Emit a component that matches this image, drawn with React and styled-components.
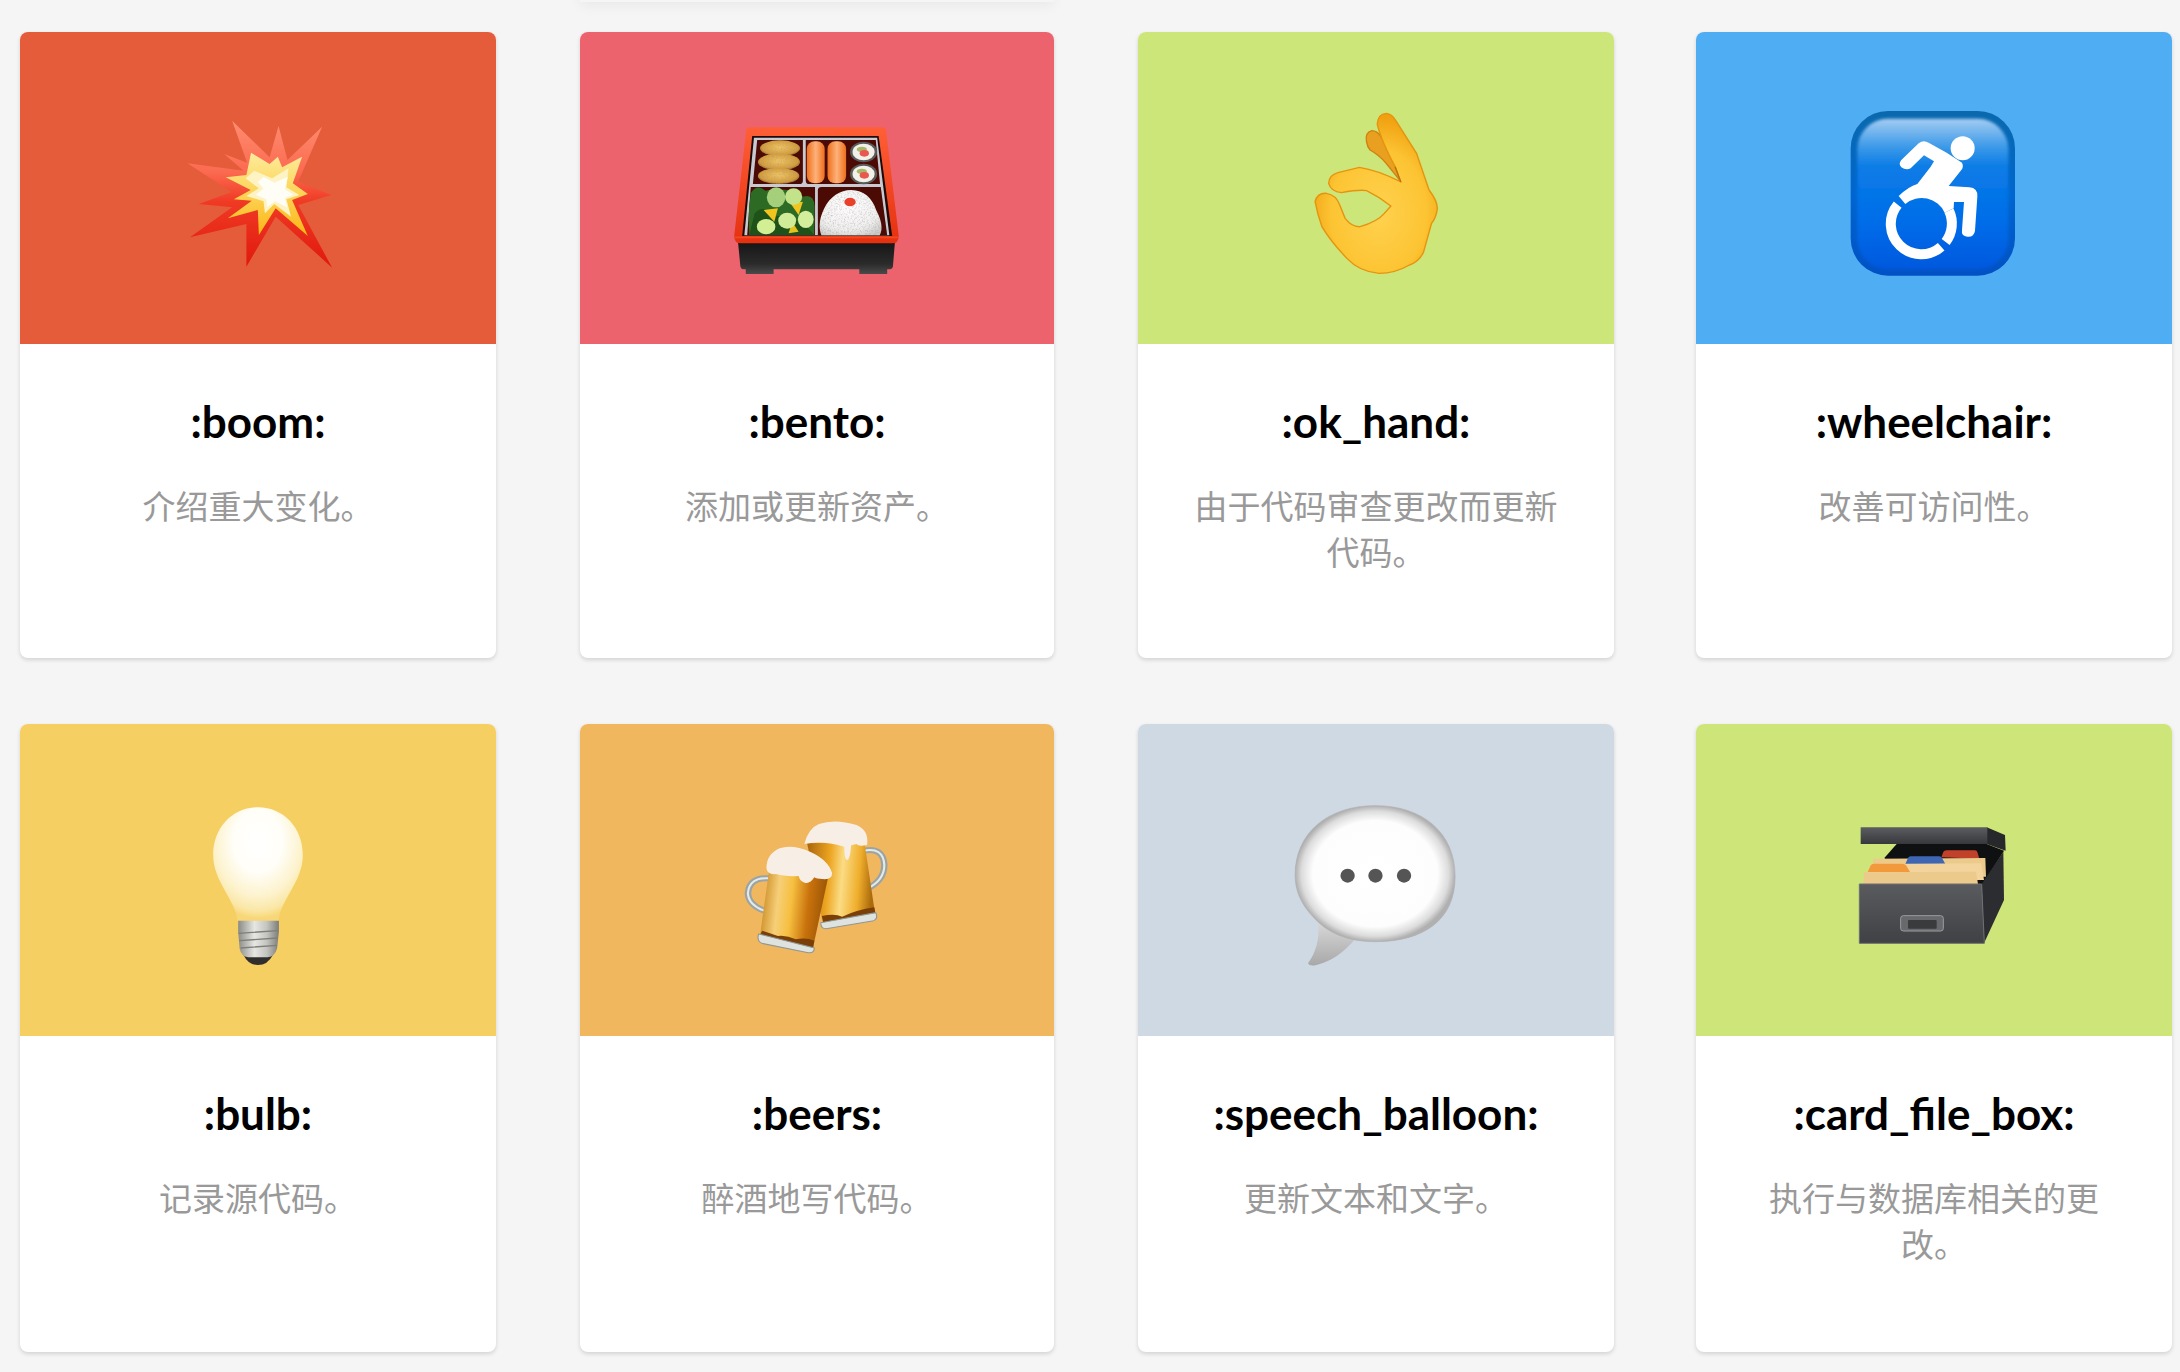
import React from "react";
import styled, { createGlobalStyle } from "styled-components";

const GlobalStyle = createGlobalStyle`
  html, body {
    margin: 0;
    padding: 0;
    background: #f5f5f5;
  }
`;

const BoomIcon = () => (
  <EmojiSvg viewBox="442.5 264 560 600" preserveAspectRatio="none">
    <defs>
      <linearGradient id="boomOuter" x1="0" y1="0" x2="0" y2="1">
        <stop offset="0" stopColor="#ff8d70" />
        <stop offset="0.35" stopColor="#fb6a50" />
        <stop offset="0.55" stopColor="#f03a24" />
        <stop offset="1" stopColor="#e0180e" />
      </linearGradient>
      <linearGradient id="boomMid" x1="0" y1="0" x2="0" y2="1">
        <stop offset="0" stopColor="#fdeb9c" />
        <stop offset="0.45" stopColor="#fcd65c" />
        <stop offset="1" stopColor="#fdb514" />
      </linearGradient>
    </defs>
    <path
      fill="url(#boomOuter)"
      d="M650 362 L755 472 L780 378 L805 480 L902 380 L835 545 L928 585 L835 615 L930 803 L772 650 L690 800 L690 672 L532 712 L650 622 L557 612 L648 576 L525 490 L682 512 L628 462 L692 488 Z"
    />
    <path
      fill="url(#boomMid)"
      d="M703 458 L755 492 L778 470 L790 502 L846 470 L820 550 L862 582 L818 600 L862 708 L772 625 L725 705 L722 630 L638 655 L705 602 L655 598 L702 570 L632 532 L690 525 Z"
    />
    <path
      fill="#fdf3c4"
      d="M712 512 L762 535 L808 505 L802 562 L838 585 L802 598 L815 650 L768 612 L742 640 L738 604 L690 588 L725 565 L688 535 Z"
    />
    <path
      fill="#fffef6"
      d="M738 530 L768 548 L806 530 L798 568 L822 584 L798 594 L804 622 L770 604 L748 622 L746 598 L716 584 L738 566 L722 546 Z"
    />
  </EmojiSvg>
);

const BentoIcon = () => (
  <EmojiSvg viewBox="439.5 264 560 600" preserveAspectRatio="none">
    <defs>
      <linearGradient id="bentoLid" x1="0" y1="0" x2="0" y2="1">
        <stop offset="0" stopColor="#ff5f36" />
        <stop offset="1" stopColor="#e5300f" />
      </linearGradient>
      <linearGradient id="bentoBase" x1="0" y1="0" x2="0" y2="1">
        <stop offset="0" stopColor="#141414" />
        <stop offset="0.7" stopColor="#2b2b2b" />
        <stop offset="1" stopColor="#4a4a4a" />
      </linearGradient>
      <linearGradient id="bentoSalmon" x1="0" y1="0" x2="1" y2="0">
        <stop offset="0" stopColor="#f0701c" />
        <stop offset="0.5" stopColor="#fdb27a" />
        <stop offset="1" stopColor="#ef6f1a" />
      </linearGradient>
      <radialGradient id="bentoFried" cx="0.5" cy="0.45" r="0.6">
        <stop offset="0" stopColor="#f0c662" />
        <stop offset="0.75" stopColor="#d39c36" />
        <stop offset="1" stopColor="#6e4412" />
      </radialGradient>
      <radialGradient id="bentoRice" cx="0.45" cy="0.35" r="0.75">
        <stop offset="0" stopColor="#ffffff" />
        <stop offset="0.7" stopColor="#f0f0f0" />
        <stop offset="1" stopColor="#cccccc" />
      </radialGradient>
      <filter id="bentoGrain" x="0" y="0" width="1" height="1">
        <feTurbulence type="fractalNoise" baseFrequency="0.22" numOctaves="2" seed="4" result="noise" />
        <feColorMatrix in="noise" type="matrix" values="0 0 0 0 0.35  0 0 0 0 0.3  0 0 0 0 0.25  0 0 0 -1.2 0.68" result="speck" />
        <feComposite in="speck" in2="SourceAlpha" operator="in" result="clipped" />
        <feMerge>
          <feMergeNode in="SourceGraphic" />
          <feMergeNode in="clipped" />
        </feMerge>
      </filter>
    </defs>
    <path fill="url(#bentoBase)" d="M498 722 L938 722 L932 800 Q930 808 920 808 L916 808 L916 822 L838 822 L838 808 L598 808 L598 822 L520 822 L520 808 L515 808 Q507 808 505 800 Z" />
    <path fill="url(#bentoLid)" d="M532 382 L902 382 Q912 382 913 392 L948 704 Q950 730 930 730 L506 730 Q486 730 488 704 L521 392 Q522 382 532 382 Z" />
    <path fill="#1d0a05" d="M538 408 L892 408 L930 708 L510 708 Z" />
    <path fill="#c9c9d2" d="M543 413 L888 413 L922 706 L516 706 Z" />
    <path fill="#4b0a03" d="M552 420 L680 420 L680 542 Q680 552 670 552 L540 552 Z" />
    <path fill="#4b0a03" d="M688 420 L884 420 L896 552 L698 552 Q688 552 688 542 Z" />
    <path fill="#4b0a03" d="M534 561 L714 561 L714 706 L524 706 Z" />
    <path fill="#4b0a03" d="M732 561 L898 561 L916 706 L722 706 L722 571 Q722 561 732 561 Z" />
    <g filter="url(#bentoGrain)">
      <ellipse cx="616" cy="445" rx="56" ry="24" fill="url(#bentoFried)" />
      <ellipse cx="613" cy="486" rx="59" ry="25" fill="url(#bentoFried)" />
      <ellipse cx="612" cy="528" rx="58" ry="24" fill="url(#bentoFried)" />
    </g>
    <rect x="691" y="424" width="50" height="126" rx="22" fill="url(#bentoSalmon)" />
    <rect x="749" y="424" width="52" height="126" rx="22" fill="url(#bentoSalmon)" />
    <ellipse cx="850" cy="456" rx="38" ry="31" fill="#5b5b5b" />
    <ellipse cx="850" cy="456" rx="31" ry="25" fill="#f1f1ea" />
    <ellipse cx="845" cy="448" rx="14" ry="8" fill="#a8b868" />
    <ellipse cx="852" cy="460" rx="13" ry="10" fill="#e8584e" />
    <ellipse cx="850" cy="522" rx="38" ry="31" fill="#5b5b5b" />
    <ellipse cx="850" cy="522" rx="31" ry="25" fill="#f1f1ea" />
    <ellipse cx="845" cy="514" rx="14" ry="8" fill="#a8b868" />
    <ellipse cx="852" cy="526" rx="13" ry="10" fill="#e8584e" />
    <path fill="#2d6a24" d="M534 580 Q550 550 575 572 Q640 558 680 590 Q712 580 713 620 L712 705 L530 705 Q525 640 534 580 Z" />
    <path fill="#1f5219" d="M545 640 Q570 610 600 650 Q640 640 700 690 L712 705 L530 705 Z" />
    <path fill="#f2c41e" d="M570 630 L610 625 L600 665 Z" />
    <path fill="#f2c41e" d="M645 610 L680 605 L668 645 Z" />
    <path fill="#e8c21c" d="M650 665 L668 695 L640 700 Z" />
    <ellipse cx="605" cy="592" rx="26" ry="30" fill="#a5cf7a" />
    <ellipse cx="654" cy="590" rx="24" ry="25" fill="#c3e38a" />
    <ellipse cx="577" cy="680" rx="26" ry="23" fill="#d3ef93" />
    <ellipse cx="636" cy="662" rx="25" ry="24" fill="#d0ec98" />
    <ellipse cx="688" cy="658" rx="22" ry="26" fill="#d3ef9c" />
    <path
      filter="url(#bentoGrain)"
      fill="url(#bentoRice)"
      d="M732 706 C722 680 728 650 740 625 C755 590 785 570 815 570 C850 570 875 595 885 630 C900 660 905 685 895 706 Z"
    />
    <ellipse cx="812" cy="606" rx="16" ry="13" fill="#e9402c" />
    <path stroke="#ef4a20" strokeWidth="5" fill="none" d="M490 712 L946 712" />
  </EmojiSvg>
);

const OkHandIcon = () => (
  <EmojiSvg viewBox="436.5 264 560 600" preserveAspectRatio="none">
    <defs>
      <radialGradient id="okSkin" cx="0.52" cy="0.62" r="0.6">
        <stop offset="0" stopColor="#ffd24f" />
        <stop offset="0.65" stopColor="#fcc433" />
        <stop offset="1" stopColor="#f0a010" />
      </radialGradient>
    </defs>
    <path
      fill="#e9a021"
      stroke="#d08210"
      strokeWidth="4"
      d="M690 425 Q685 398 705 392 Q720 392 730 410 L795 510 L790 550 L745 490 Q725 465 700 450 Q692 440 690 425 Z"
    />
    <path
      fill="url(#okSkin)"
      stroke="#e6940e"
      strokeWidth="4"
      d="M720 372 Q722 342 745 340 Q762 342 772 362 L830 460 L865 570 Q890 605 888 628 Q884 655 872 670 L850 755 Q838 785 810 795 Q770 820 725 820 Q670 815 635 775 Q590 725 565 680 Q552 640 546 605 Q552 578 578 580 Q605 585 615 615 L630 655 Q650 682 672 680 Q720 665 740 640 L758 618 Q725 590 690 572 Q670 568 620 578 Q590 575 584 550 Q585 525 610 518 L670 502 Q720 510 785 545 L770 500 Q730 420 720 372 Z"
    />
    <path fill="none" stroke="#b9720c" strokeWidth="4" d="M770 500 L786 546" />
  </EmojiSvg>
);

const WheelchairIcon = () => (
  <EmojiSvg viewBox="462 264 600 600" preserveAspectRatio="none">
    <defs>
      <linearGradient id="wheelRim" x1="0" y1="0" x2="0" y2="1">
        <stop offset="0" stopColor="#0a69ac" />
        <stop offset="0.5" stopColor="#0066cf" />
        <stop offset="1" stopColor="#0151c4" />
      </linearGradient>
      <linearGradient id="wheelFace" x1="0" y1="0" x2="0" y2="1">
        <stop offset="0" stopColor="#a4cdf3" />
        <stop offset="0.18" stopColor="#3f9be8" />
        <stop offset="0.32" stopColor="#0a7ce6" />
        <stop offset="0.7" stopColor="#006ce8" />
        <stop offset="1" stopColor="#0058de" />
      </linearGradient>
      <filter id="wheelSoft">
        <feGaussianBlur stdDeviation="4" />
      </filter>
    </defs>
    <rect x="512" y="333" width="493" height="494" rx="112" fill="url(#wheelRim)" />
    <rect x="532" y="356" width="453" height="452" rx="92" fill="url(#wheelFace)" filter="url(#wheelSoft)" />
    <circle cx="848" cy="445" r="36" fill="#fff" />
    <path
      fill="#fff"
      d="M664 480 L716 430 Q730 418 746 428 L800 458 L846 488 Q852 500 844 510 L806 558 L868 562 Q894 564 892 590 L885 692 Q882 712 862 710 Q843 708 846 690 L852 606 L822 606 L821 625 L794 638 A 76 76 0 0 0 676 612 L656 588 Q685 560 712 552 L752 500 L762 484 L732 466 L692 505 Q678 512 664 502 Q654 492 664 480 Z"
    />
    <path fill="none" stroke="#fff" strokeWidth="30" d="M653 614 A 91 91 0 0 0 783.5 740" />
    <path fill="none" stroke="#fff" strokeWidth="30" d="M797 726 A 91 91 0 0 0 807 632" />
  </EmojiSvg>
);

const BulbIcon = () => (
  <EmojiSvg viewBox="442.5 240 560 600" preserveAspectRatio="none">
    <defs>
      <radialGradient id="bulbGlass" cx="0.5" cy="0.3" r="0.68">
        <stop offset="0" stopColor="#ffffff" />
        <stop offset="0.4" stopColor="#fffef8" />
        <stop offset="0.7" stopColor="#fdf3cf" />
        <stop offset="0.9" stopColor="#fae7a6" />
        <stop offset="1" stopColor="#f8d778" />
      </radialGradient>
      <linearGradient id="bulbMetal" x1="0" y1="0" x2="1" y2="0">
        <stop offset="0" stopColor="#8a8a86" />
        <stop offset="0.4" stopColor="#e6e6e2" />
        <stop offset="0.7" stopColor="#c4c4c0" />
        <stop offset="1" stopColor="#7c7c78" />
      </linearGradient>
    </defs>
    <path
      fill="url(#bulbGlass)"
      d="M665 662 C660 600 597 545 597 465 C597 385 650 322 722 322 C795 322 848 385 848 465 C848 545 785 600 780 662 Z"
    />
    <path fill="#302f2d" d="M682 765 L764 765 Q750 795 722 795 Q695 795 682 765 Z" />
    <path fill="url(#bulbMetal)" d="M667 662 L781 662 L781 695 L776 745 Q770 770 750 772 L695 772 Q675 770 671 745 L667 695 Z" />
    <path fill="none" stroke="#7e7e7a" strokeWidth="4" d="M668 700 L778 692 M670 722 L778 714 M674 744 L776 736" />
  </EmojiSvg>
);

const BeersIcon = () => (
  <EmojiSvg viewBox="439.5 240 560 600" preserveAspectRatio="none">
    <defs>
      <linearGradient id="beerBack" x1="0" y1="0" x2="1" y2="0.1">
        <stop offset="0" stopColor="#a8640a" />
        <stop offset="0.35" stopColor="#eda522" />
        <stop offset="0.55" stopColor="#fbdc84" />
        <stop offset="0.8" stopColor="#efae2c" />
        <stop offset="1" stopColor="#ad6c0c" />
      </linearGradient>
      <linearGradient id="beerFront" x1="0" y1="0" x2="1" y2="0.12">
        <stop offset="0" stopColor="#c27c10" />
        <stop offset="0.3" stopColor="#f6cf78" />
        <stop offset="0.5" stopColor="#f6bf40" />
        <stop offset="0.75" stopColor="#c9720c" />
        <stop offset="1" stopColor="#9c5606" />
      </linearGradient>
    </defs>
    <path fill="none" stroke="#9aa4a4" strokeWidth="18" d="M850 452 Q905 440 908 495 Q908 540 862 565" />
    <path fill="none" stroke="#e4e9e9" strokeWidth="6" d="M850 452 Q905 440 908 495 Q908 540 862 565" />
    <path fill="url(#beerBack)" d="M692 430 L852 425 L882 640 L736 672 Z" />
    <path fill="#7a3f06" d="M733 648 Q770 640 790 650 Q830 630 880 622 L884 645 L738 672 Z" />
    <path fill="#dfe3e0" stroke="#8f9796" strokeWidth="3" d="M730 668 L884 638 Q892 655 878 662 L745 686 Q730 686 730 668 Z" />
    <path fill="#f7efe6" d="M684 432 Q695 385 725 372 Q770 355 830 375 Q865 390 860 435 Q835 440 830 432 L815 436 Q812 480 804 480 Q796 480 796 440 Q730 420 684 432 Z" />
    <path fill="none" stroke="#9aa4a4" strokeWidth="18" d="M586 535 Q530 530 526 580 Q528 615 572 632" />
    <path fill="none" stroke="#e4e9e9" strokeWidth="6" d="M586 535 Q530 530 526 580 Q528 615 572 632" />
    <path fill="url(#beerFront)" d="M585 515 L750 535 L708 745 L560 705 Z" />
    <path fill="#7a3f06" d="M566 692 Q590 700 610 708 Q635 705 660 718 Q690 712 712 722 L708 745 L560 705 Z" />
    <path fill="#dfe3e0" stroke="#8f9796" strokeWidth="3" d="M556 702 L712 744 Q712 760 695 758 L565 730 Q550 722 556 702 Z" />
    <path fill="#f7efe6" d="M578 505 Q578 462 615 445 Q650 432 700 455 Q752 480 762 520 Q762 540 735 537 Q718 537 712 532 Q700 552 685 548 Q672 545 668 528 Q630 530 605 522 Q580 525 578 505 Z" />
  </EmojiSvg>
);

const SpeechIcon = () => (
  <EmojiSvg viewBox="436.5 240 560 600" preserveAspectRatio="none">
    <defs>
      <radialGradient id="speechFill" cx="0.5" cy="0.5" r="0.5">
        <stop offset="0" stopColor="#ffffff" />
        <stop offset="0.78" stopColor="#fdfdfd" />
        <stop offset="0.92" stopColor="#dcdcdc" />
        <stop offset="1" stopColor="#b0b0b0" />
      </radialGradient>
      <linearGradient id="speechTail" x1="0" y1="0" x2="0" y2="1">
        <stop offset="0" stopColor="#d6d6d6" />
        <stop offset="1" stopColor="#a8a8a8" />
      </linearGradient>
    </defs>
    <path fill="url(#speechTail)" d="M555 672 Q560 740 526 790 Q530 800 550 795 Q610 780 660 715 Z" />
    <path
      fill="url(#speechFill)"
      stroke="#b0b0b0"
      strokeWidth="2"
      d="M714 317 C850 317 938 400 938 530 C938 660 850 725 714 725 C640 725 580 700 540 650 C505 610 490 570 490 525 C490 400 580 317 714 317 Z"
    />
    <ellipse cx="637" cy="527" rx="20" ry="21" fill="#555" />
    <ellipse cx="715" cy="527" rx="20" ry="21" fill="#555" />
    <ellipse cx="795" cy="527" rx="20" ry="21" fill="#555" />
  </EmojiSvg>
);

const CardFileBoxIcon = () => (
  <EmojiSvg viewBox="462 240 600 600" preserveAspectRatio="none">
    <defs>
      <linearGradient id="boxFront" x1="0" y1="0" x2="0" y2="1">
        <stop offset="0" stopColor="#5a5b5e" />
        <stop offset="1" stopColor="#404144" />
      </linearGradient>
      <linearGradient id="boxLid" x1="0" y1="0" x2="0" y2="1">
        <stop offset="0" stopColor="#5c5d60" />
        <stop offset="1" stopColor="#37383b" />
      </linearGradient>
    </defs>
    <path fill="#0f1011" d="M615 472 L650 432 L920 432 L972 452 L905 560 L600 560 Z" />
    <path fill="#c2412a" d="M784 472 L790 456 Q792 451 800 451 L885 451 Q890 451 892 456 L898 476 Z" />
    <path fill="#ecca8c" d="M580 476 L916 474 L918 530 L575 530 Z" />
    <path fill="#3f66b2" d="M676 492 L684 474 Q686 469 692 469 L778 469 Q784 469 786 474 L796 492 Z" />
    <path fill="#f2d49c" d="M565 515 L572 492 L904 490 L912 540 L560 540 Z" />
    <path fill="#f29a3b" d="M563 516 L572 496 Q574 491 582 491 L668 491 Q674 491 678 496 L690 516 Z" />
    <path fill="#ecca8c" d="M552 517 L888 515 L894 552 L550 552 Z" />
    <path fill="#2b2d31" d="M905 552 L970 455 L972 600 L912 730 Z" />
    <path fill="url(#boxFront)" stroke="#6e6f72" strokeWidth="3" d="M538 552 L905 552 L913 730 L538 730 Z" />
    <rect x="662" y="647" width="128" height="46" rx="8" fill="#68696c" stroke="#9b9c9e" strokeWidth="3" />
    <rect x="684" y="660" width="86" height="26" rx="3" fill="#3a3b3d" />
    <path fill="#27282b" d="M920 382 L975 405 L977 452 L920 432 Z" />
    <path fill="url(#boxLid)" d="M542 382 L922 382 L922 432 L542 432 Z" />
  </EmojiSvg>
);

const cards = [
  { name: ":boom:", desc: "介绍重大变化。", color: "#e55c3a", Icon: BoomIcon },
  { name: ":bento:", desc: "添加或更新资产。", color: "#ec636e", Icon: BentoIcon, lifted: true },
  { name: ":ok_hand:", desc: "由于代码审查更改而更新代码。", color: "#cde67a", Icon: OkHandIcon },
  { name: ":wheelchair:", desc: "改善可访问性。", color: "#4fadf4", Icon: WheelchairIcon },
  { name: ":bulb:", desc: "记录源代码。", color: "#f6cf63", Icon: BulbIcon },
  { name: ":beers:", desc: "醉酒地写代码。", color: "#f0b75f", Icon: BeersIcon },
  { name: ":speech_balloon:", desc: "更新文本和文字。", color: "#cfd9e4", Icon: SpeechIcon },
  { name: ":card_file_box:", desc: "执行与数据库相关的更改。", color: "#cee679", Icon: CardFileBoxIcon },
];

const App = () => {
  return (
    <>
      <GlobalStyle />
      <Page>
        <Grid>
          {cards.map(({ name, desc, color, Icon, lifted }) => (
            <Card key={name} $lifted={lifted}>
              <Banner $color={color}>
                <Icon />
              </Banner>
              <CardBody>
                <Title>{name}</Title>
                <Desc>{desc}</Desc>
              </CardBody>
            </Card>
          ))}
        </Grid>
      </Page>
    </>
  );
};

const Page = styled.div`
  height: 1372px;
  overflow: hidden;
  padding: 32px 8px 0 20px;
  box-sizing: border-box;
  background: #f5f5f5;
`;

const Grid = styled.div`
  display: grid;
  grid-template-columns: 476px 475px 476px 476px;
  grid-template-rows: 626px 628px;
  column-gap: 83px;
  row-gap: 66px;
`;

const Card = styled.div`
  position: relative;
  display: flex;
  flex-direction: column;
  background: #fff;
  border-radius: 8px;
  box-shadow: 0 2px 4px rgba(0, 0, 0, 0.14);

  &:nth-child(4n + 2) {
    margin-left: 1px;
  }

  &:nth-child(4n + 3) {
    margin-left: 1px;
    margin-right: -1px;
  }

  ${(props) =>
    props.$lifted &&
    `
    &::before {
      content: "";
      position: absolute;
      left: 0;
      right: 0;
      top: -100px;
      height: 70px;
      box-shadow: 0 4px 12px rgba(0, 0, 0, 0.05);
    }
  `}
`;

const Banner = styled.div`
  height: 312px;
  display: flex;
  align-items: center;
  justify-content: center;
  background: ${(props) => props.$color};
  border-radius: 8px 8px 0 0;
`;

const EmojiSvg = styled.svg`
  width: 200px;
  height: 200px;
  display: block;
`;

const CardBody = styled.div`
  padding: 50px 48px 0;
  text-align: center;
`;

const Title = styled.div`
  font-family: "Lato", "Liberation Sans", sans-serif;
  font-weight: 700;
  font-size: 44px;
  line-height: 54px;
  color: #000;
`;

const Desc = styled.div`
  margin-top: 34px;
  font-family: "Noto Sans CJK SC", "Liberation Sans", sans-serif;
  font-size: 33px;
  line-height: 46px;
  color: #999;
`;

export default App;
